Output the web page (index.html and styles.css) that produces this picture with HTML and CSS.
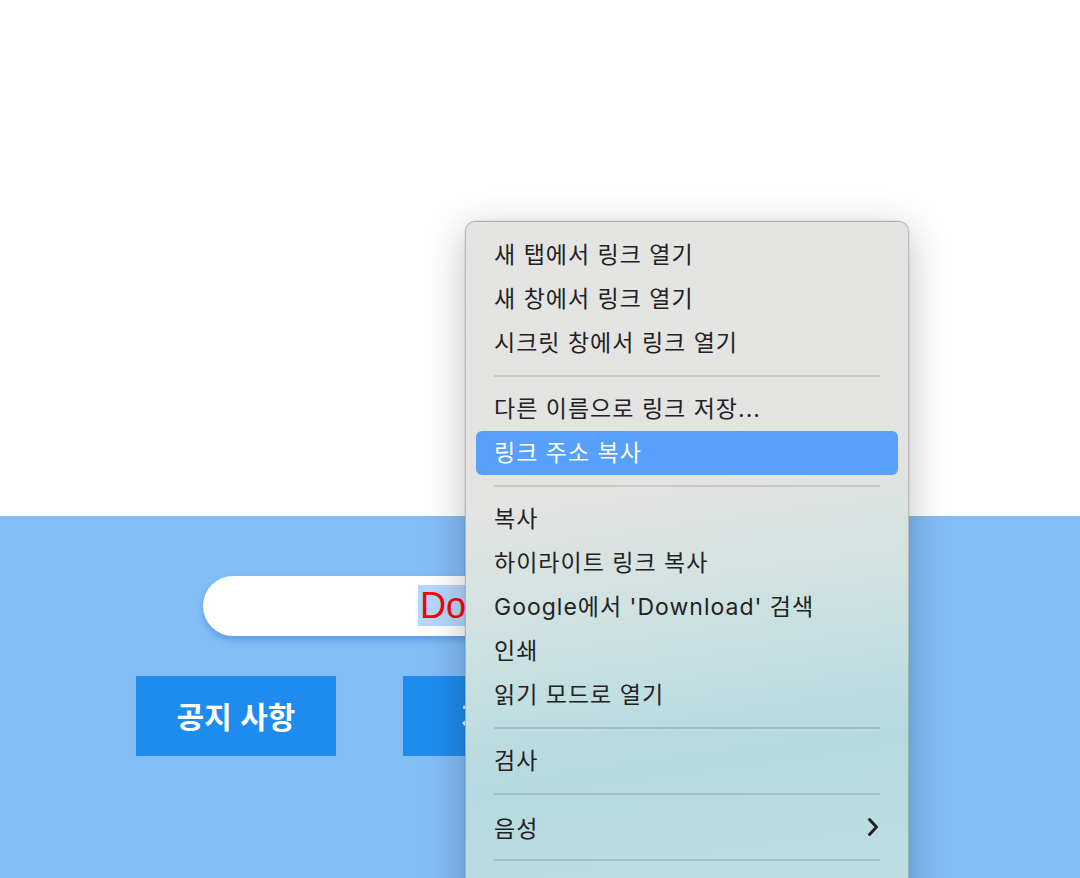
FILE: index.html
```html
<!DOCTYPE html>
<html lang="ko">
<head>
    <meta charset="UTF-8">
    <meta name="viewport" content="width=device-width, initial-scale=1.0">
    <title>공지 사항</title>
    <link rel="stylesheet" href="styles.css">
</head>
<body>
    <div class="top"></div>

    <section class="hero">
        <div class="search">
            <span class="search-text"><span class="selected">Download</span></span>
        </div>
        <div class="buttons">
            <a class="btn" href="#">공지 사항</a>
            <a class="btn" href="#">자료실</a>
            <a class="btn" href="#">문의하기</a>
        </div>
    </section>

    <div class="context-menu">
        <div class="item">새 탭에서 링크 열기</div>
        <div class="item">새 창에서 링크 열기</div>
        <div class="item">시크릿 창에서 링크 열기</div>
        <div class="sep"></div>
        <div class="item">다른 이름으로 링크 저장...</div>
        <div class="item active">링크 주소 복사</div>
        <div class="sep"></div>
        <div class="item">복사</div>
        <div class="item">하이라이트 링크 복사</div>
        <div class="item">Google에서 'Download' 검색</div>
        <div class="item">인쇄</div>
        <div class="item">읽기 모드로 열기</div>
        <div class="sep"></div>
        <div class="item">검사</div>
        <div class="sep"></div>
        <div class="item has-sub">음성
            <svg class="chevron" width="14" height="20" viewBox="0 0 14 20"><path d="M3.5 2.5 L10.5 10 L3.5 17.5" fill="none" stroke="#222" stroke-width="3" stroke-linecap="round" stroke-linejoin="round"/></svg>
        </div>
        <div class="sep"></div>
    </div>
</body>
</html>
```

FILE: styles.css
```css
html, body { margin: 0; height: 100%; overflow: hidden; }
body { font-family: "Noto Sans CJK KR", "Noto Sans", sans-serif; background-color: #83bdf5; position: relative; }

.top { height: 516px; background-color: #fff; }

.hero { padding-top: 60px; height: 302px; box-sizing: border-box; }
.search { margin-left: 203px; width: 674px; height: 60px; background-color: #fff; border-radius: 30px; box-shadow: 0 4px 6px rgba(20, 100, 200, 0.35); display: flex; align-items: center; padding-left: 215px; box-sizing: border-box; }
.search-text { font-family: "Liberation Sans", Arial, sans-serif; font-size: 36px; color: #f00; line-height: 48px; }
.selected { background-color: #b3d7fe; padding: 0 2px; }

.buttons { display: flex; gap: 67px; margin-top: 40px; padding-left: 136px; }
.btn { width: 200px; height: 80px; background-color: #1e8cef; color: #fff; font-size: 30px; font-weight: 700; text-decoration: none; display: flex; align-items: center; justify-content: center; padding-bottom: 2px; box-sizing: border-box; }

.context-menu { position: absolute; left: 465px; top: 221px; width: 444px; box-sizing: border-box; padding: 11px 10px 60px; border: 1px solid rgba(0, 0, 0, 0.18); border-radius: 10px; background: linear-gradient(172deg, #e4e4e3 0%, #e3e3e2 38%, #d6e3e1 48%, #c4dfe1 62%, #b5d9e0 74%, #bcdde1 88%, #c0dfe1 100%); box-shadow: 0 0 0 0.5px rgba(0, 0, 0, 0.1), 0 10px 40px rgba(0, 0, 0, 0.25); }
.item { height: 44px; display: flex; align-items: center; padding: 0 20px 5px 18px; box-sizing: border-box; border-radius: 6px; font-family: "Inter", "Noto Sans CJK KR", sans-serif; font-size: 23px; color: #222; letter-spacing: 1px; }
.item.active { background-color: #57a0fe; color: #fff; }
.has-sub { justify-content: space-between; padding-bottom: 0; }
.chevron { margin-right: -2px; }
.sep { height: 2px; margin: 10px 18px; background-color: rgba(0, 0, 0, 0.12); }
```
